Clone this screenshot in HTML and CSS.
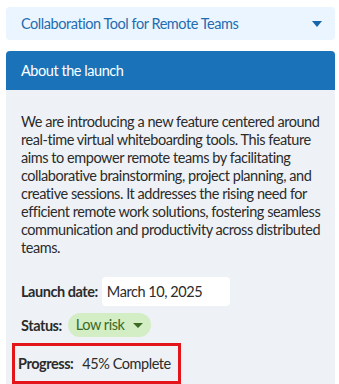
FILE: index.html
```html
<!DOCTYPE html>
<html lang="en">
<head>
    <meta charset="UTF-8">
    <title>Launch details</title>
    <link rel="stylesheet" href="styles.css">
</head>
<body>
    <div class="accordion">
        <span>Collaboration Tool for Remote Teams</span>
        <span class="caret caret-blue"></span>
    </div>

    <div class="panel">
        <div class="panel-head">About the launch</div>
        <div class="panel-body">
            <p class="desc">
                We are introducing a new feature centered around real-time virtual whiteboarding tools. This feature aims to empower remote teams by facilitating collaborative brainstorming, project planning, and creative sessions. It addresses the rising need for efficient remote work solutions, fostering seamless communication and productivity across distributed teams.
            </p>
            <div class="row">
                <span class="label">Launch date:</span>
                <span class="date-box">March 10, 2025</span>
            </div>
            <div class="row">
                <span class="label">Status:</span>
                <span class="pill">Low risk <span class="caret caret-green"></span></span>
            </div>
            <div class="progress">
                <span class="label">Progress:</span>
                <span>45% Complete</span>
            </div>
        </div>
    </div>
</body>
</html>
```

FILE: styles.css
```css
body {
    font-family: Lato, sans-serif;
    margin: 7px 4px 0 6px;
    color: #2b2b2b;
    font-size: 14.5px;
    letter-spacing: -0.45px;
    white-space: nowrap;
}
.accordion {
    display: flex;
    align-items: center;
    justify-content: space-between;
    height: 33px;
    padding: 0 13px 0 15px;
    background: #ebf5ff;
    border-radius: 4px;
    color: #1f6cb0;
}
.caret {
    display: inline-block;
    width: 0;
    height: 0;
    border-left: 5px solid transparent;
    border-right: 5px solid transparent;
}
.caret-blue {
    border-top: 6px solid #1565a8;
}
.caret-green {
    border-top: 5px solid #3a6a23;
    margin-left: 5px;
    vertical-align: 2px;
}
.panel {
    margin-top: 11px;
}
.panel-head {
    background: #1a73b9;
    color: #fff;
    height: 39px;
    line-height: 39px;
    padding-left: 15px;
    border-radius: 4px 4px 0 0;
}
.panel-body {
    background: #eef2f6;
    padding: 23px 6px 0 6px;
    height: 300px;
}
.desc {
    margin: 0 0 20px 9px;
    line-height: 18px;
    width: 300px;
    white-space: normal;
}
.row {
    display: flex;
    align-items: center;
    gap: 4px;
    padding-left: 9px;
    margin-bottom: 7px;
}
.label {
    font-weight: bold;
}
.date-box {
    background: #fff;
    border-radius: 4px;
    padding: 0 5px;
    height: 29px;
    line-height: 29px;
    width: 118px;
}
.pill {
    background: #d3edc5;
    color: #3a6a23;
    border-radius: 12px;
    height: 24px;
    line-height: 24px;
    padding: 0 8px 0 8px;
    margin-left: 2px;
}
.progress {
    display: flex;
    align-items: center;
    gap: 9px;
    border: 3px solid #e3151b;
    width: 160px;
    height: 35px;
    padding-left: 3px;
    margin-top: -1px;
}
```
